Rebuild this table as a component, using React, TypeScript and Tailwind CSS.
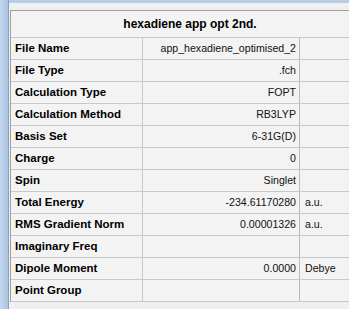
const rows: [string, string, string][] = [
  ["File Name", "app_hexadiene_optimised_2", ""],
  ["File Type", ".fch", ""],
  ["Calculation Type", "FOPT", ""],
  ["Calculation Method", "RB3LYP", ""],
  ["Basis Set", "6-31G(D)", ""],
  ["Charge", "0", ""],
  ["Spin", "Singlet", ""],
  ["Total Energy", "-234.61170280", "a.u."],
  ["RMS Gradient Norm", "0.00001326", "a.u."],
  ["Imaginary Freq", "", ""],
  ["Dipole Moment", "0.0000", "Debye"],
  ["Point Group", "", ""],
];

export default function App() {
  return (
    <div className="flex h-[309px] w-[349px] overflow-hidden bg-[#f0f0f0] font-['Liberation_Sans',Arial,sans-serif] text-black">
      <div className="h-full w-[9px] shrink-0 border-r border-[#8e9fb3] bg-gradient-to-r from-[#c4d8ee] to-[#aac4e4]" />
      <div className="flex min-w-0 flex-1 flex-col">
        <div className="h-[3px] shrink-0 bg-[#b6cde9]" />
        <div className="pl-[1px] pt-[7px]">
          <div className="w-[360px] border-l border-t border-[#a0a0a0] bg-[#f3f3f3]">
            <div className="flex h-[27px] items-center justify-center border-b border-r border-[#c8c8c8] text-[12px] font-bold">
              hexadiene app opt 2nd.
            </div>
            {rows.map(([label, value, unit]) => (
              <div key={label} className="grid h-[22px] grid-cols-[132px_157px_1fr] border-b border-[#c8c8c8]">
                <div className="flex items-center border-r border-[#c8c8c8] pl-[4px] text-[11.5px] font-bold">{label}</div>
                <div className="flex items-center justify-end border-r border-[#b8b8b8] pr-[3px] text-[10.6px] text-[#111]">{value}</div>
                <div className="flex items-center pl-[5px] text-[10.6px] text-[#111]">{unit}</div>
              </div>
            ))}
          </div>
        </div>
      </div>
    </div>
  );
}
